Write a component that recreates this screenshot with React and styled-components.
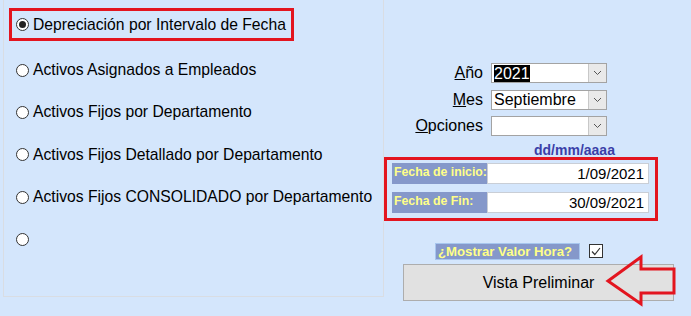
import React from 'react';
import styled, { createGlobalStyle } from 'styled-components';

const Global = createGlobalStyle`
  html, body {
    margin: 0;
    padding: 0;
    background: #d4e6fc;
  }
  body {
    font-family: 'Liberation Sans', Arial, sans-serif;
    color: #000;
  }
`;

const Page = styled.div`
  display: flex;
  width: 691px;
  height: 316px;
  overflow: hidden;
  background: #d4e6fc;
`;

const Panel = styled.div`
  box-sizing: border-box;
  margin-left: 3px;
  width: 381px;
  height: 297px;
  border: 1px solid #d9dde3;
  border-top: none;
  padding-top: 8px;
  padding-left: 5px;
`;

const Highlight = styled.div`
  box-sizing: border-box;
  width: 285px;
  height: 33px;
  border: 3px solid #e3151f;
  display: flex;
  align-items: center;
  padding-left: 4px;
  margin-bottom: 8px;
`;

const OptionRow = styled.label`
  display: flex;
  align-items: center;
  height: 42.3px;
  padding-left: 7px;
`;

const RadioDot = styled.span`
  box-sizing: border-box;
  width: 13px;
  height: 13px;
  border-radius: 50%;
  border: 1px solid #333;
  background: #fff;
  display: flex;
  align-items: center;
  justify-content: center;
  margin-right: 4px;
  flex-shrink: 0;
  &::after {
    content: '';
    width: 7px;
    height: 7px;
    border-radius: 50%;
    background: ${(p) => (p.$checked ? '#222' : 'transparent')};
  }
`;

const OptionText = styled.span`
  font-size: 15.7px;
  white-space: nowrap;
`;

const Right = styled.div`
  flex: 1;
  display: flex;
  flex-direction: column;
  padding-top: 63px;
`;

const FormGrid = styled.div`
  display: grid;
  grid-template-columns: 99px 116px;
  column-gap: 8px;
  row-gap: 6.5px;
  align-items: center;
`;

const FieldLabel = styled.span`
  text-align: right;
  font-size: 16px;
  line-height: 20px;
`;

const Combo = styled.div`
  box-sizing: border-box;
  height: 20px;
  border: 1px solid #a3a3a3;
  background: #fff;
  display: flex;
  align-items: stretch;
`;

const ComboValue = styled.div`
  flex: 1;
  display: flex;
  align-items: center;
  padding-left: 2px;
  font-size: 16px;
  overflow: hidden;
  white-space: nowrap;
`;

const Selected = styled.span`
  background: #000;
  color: #fff;
  line-height: 17px;
`;

const ComboButton = styled.div`
  width: 17px;
  border-left: 1px solid #c8c8c8;
  background: #e9e9e9;
  display: flex;
  align-items: center;
  justify-content: center;
`;

const DateHint = styled.div`
  margin-top: 7px;
  margin-left: 150px;
  font-size: 14px;
  font-weight: bold;
  color: #3a3fa8;
  line-height: 14px;
`;

const DateBox = styled.div`
  box-sizing: border-box;
  width: 274px;
  border: 3px solid #e3151f;
  padding: 3px 6px 5px 5px;
  display: flex;
  flex-direction: column;
  gap: 8px;
`;

const DateRow = styled.div`
  display: flex;
  height: 21px;
`;

const DateLabel = styled.div`
  width: 95px;
  background: #8598ca;
  color: #ffff88;
  font-weight: bold;
  font-size: 12.3px;
  padding: 2px 0 0 2px;
  box-sizing: border-box;
  white-space: nowrap;
`;

const DateInput = styled.div`
  flex: 1;
  box-sizing: border-box;
  background: #fff;
  border: 1px solid #c9ced6;
  text-align: right;
  font-size: 15px;
  line-height: 19px;
  padding-right: 4px;
`;

const CheckRow = styled.div`
  display: flex;
  align-items: center;
  margin-top: 22px;
  margin-left: 51px;
  height: 16px;
`;

const CheckLabel = styled.div`
  box-sizing: border-box;
  width: 145px;
  height: 17px;
  background: #8598ca;
  border: 1px solid #a7c6ee;
  color: #ffff88;
  font-weight: bold;
  font-size: 13.2px;
  line-height: 15px;
  padding-left: 2px;
  white-space: nowrap;
`;

const CheckBox = styled.div`
  box-sizing: border-box;
  width: 14px;
  height: 14px;
  margin-left: 9px;
  border: 1px solid #333;
  background: #fff;
  display: flex;
  align-items: center;
  justify-content: center;
`;

const ButtonWrap = styled.div`
  position: relative;
  margin-top: 5px;
  margin-left: 19px;
`;

const PreviewButton = styled.button`
  box-sizing: border-box;
  width: 271px;
  height: 37px;
  background: #e1e1e1;
  border: 1px solid #adadad;
  font-family: 'Liberation Sans', Arial, sans-serif;
  font-size: 16px;
  color: #000;
  padding: 0;
`;

const Arrow = styled.svg`
  position: absolute;
  left: 201px;
  top: -10px;
  pointer-events: none;
`;

const options = [
  'Activos Asignados a Empleados',
  'Activos Fijos por Departamento',
  'Activos Fijos Detallado por Departamento',
  'Activos Fijos CONSOLIDADO por Departamento',
  '',
];

const Chevron = () => (
  <svg width="9" height="6" viewBox="0 0 9 6">
    <path d="M1 1 L4.5 4.5 L8 1" fill="none" stroke="#555" strokeWidth="1" />
  </svg>
);

export default function App() {
  return (
    <Page>
      <Global />
      <Panel>
        <Highlight>
          <RadioDot $checked />
          <OptionText>Depreciación por Intervalo de Fecha</OptionText>
        </Highlight>
        {options.map((o, i) => (
          <OptionRow key={i}>
            <RadioDot />
            <OptionText>{o}</OptionText>
          </OptionRow>
        ))}
      </Panel>
      <Right>
        <FormGrid>
          <FieldLabel>
            <u>A</u>ño
          </FieldLabel>
          <Combo>
            <ComboValue>
              <Selected>2021</Selected>
            </ComboValue>
            <ComboButton>
              <Chevron />
            </ComboButton>
          </Combo>
          <FieldLabel>
            <u>M</u>es
          </FieldLabel>
          <Combo>
            <ComboValue>Septiembre</ComboValue>
            <ComboButton>
              <Chevron />
            </ComboButton>
          </Combo>
          <FieldLabel>
            <u>O</u>pciones
          </FieldLabel>
          <Combo>
            <ComboValue />
            <ComboButton>
              <Chevron />
            </ComboButton>
          </Combo>
        </FormGrid>
        <DateHint>dd/mm/aaaa</DateHint>
        <DateBox>
          <DateRow>
            <DateLabel>Fecha de inicio:</DateLabel>
            <DateInput>1/09/2021</DateInput>
          </DateRow>
          <DateRow>
            <DateLabel>Fecha de Fin:</DateLabel>
            <DateInput>30/09/2021</DateInput>
          </DateRow>
        </DateBox>
        <CheckRow>
          <CheckLabel>¿Mostrar Valor Hora?</CheckLabel>
          <CheckBox>
            <svg width="10" height="9" viewBox="0 0 10 9">
              <path d="M1 4.5 L3.8 7.5 L9 1" fill="none" stroke="#333" strokeWidth="1.2" />
            </svg>
          </CheckBox>
        </CheckRow>
        <ButtonWrap>
          <PreviewButton>Vista Preliminar</PreviewButton>
          <Arrow width="74" height="54" viewBox="0 0 74 54">
            <polygon
              points="4,27 37,3 37,15 70,15 70,39 37,39 37,50"
              fill="none"
              stroke="#e3151f"
              strokeWidth="3"
              strokeLinejoin="miter"
            />
          </Arrow>
        </ButtonWrap>
      </Right>
    </Page>
  );
}
